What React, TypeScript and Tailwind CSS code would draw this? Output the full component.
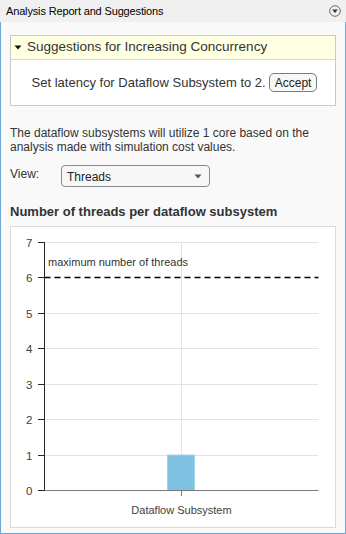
import React from "react";

const ticks = [0, 1, 2, 3, 4, 5, 6, 7];
const yOf = (v: number) => Math.round(263 - (v * 248) / 7) + 0.5;

function Chart() {
  return (
    <svg width="323" height="300" viewBox="0 0 323 300" style={{ display: "block" }}>
      {ticks.map((t) =>
        t > 0 && t !== 6 ? (
          <line key={"g" + t} x1={33.5} x2={307.5} y1={yOf(t)} y2={yOf(t)} stroke="#e3e3e3" strokeWidth={1} />
        ) : null
      )}
      <line x1={170.5} x2={170.5} y1={15.5} y2={263.5} stroke="#e3e3e3" strokeWidth={1} />
      <rect x={156.5} y={228} width={27} height={35.5} fill="#7fc1e3" stroke="#a4d2ec" strokeWidth={1} />
      <line x1={33.5} x2={307.5} y1={50.5} y2={50.5} stroke="#000" strokeWidth={1.5} strokeDasharray="6 4" />
      <text x={37} y={39} fontSize={11} fill="#333" fontFamily="Liberation Sans, Arial, sans-serif">
        maximum number of threads
      </text>
      <line x1={33.5} x2={33.5} y1={15} y2={264} stroke="#262626" strokeWidth={1} />
      <line x1={33.5} x2={307.5} y1={263.5} y2={263.5} stroke="#7a7a7a" strokeWidth={1} />
      <line x1={170.5} x2={170.5} y1={263.5} y2={269} stroke="#7a7a7a" strokeWidth={1} />
      {ticks.map((t) => (
        <g key={"t" + t}>
          <line x1={27} x2={33.5} y1={yOf(t)} y2={yOf(t)} stroke="#262626" strokeWidth={1} />
          <text
            x={21.5}
            y={yOf(t) + 4}
            fontSize={11.5}
            textAnchor="end"
            fill="#404040"
            fontFamily="Liberation Sans, Arial, sans-serif"
          >
            {t}
          </text>
        </g>
      ))}
      <text
        x={170.5}
        y={287}
        fontSize={11}
        textAnchor="middle"
        fill="#404040"
        fontFamily="Liberation Sans, Arial, sans-serif"
      >
        Dataflow Subsystem
      </text>
    </svg>
  );
}

export default function App() {
  return (
    <div
      className="w-[346px] h-[534px] flex flex-col text-[#333]"
      style={{ fontFamily: '"Liberation Sans", Arial, sans-serif' }}
    >
      <div className="h-[22px] shrink-0 bg-[#f0f0f0] flex items-center justify-between pl-[6px] pr-[5px]">
        <span className="text-[11px] text-black tracking-[-0.15px]">Analysis Report and Suggestions</span>
        <svg width="12" height="12" viewBox="0 0 12 12">
          <circle cx="6" cy="6" r="5.3" fill="none" stroke="#6b6b6b" strokeWidth="1" />
          <path d="M3.2 4.6 L8.8 4.6 L6 8 Z" fill="#333" />
        </svg>
      </div>
      <div className="flex-1 flex flex-col bg-[#f9f9f9] border-x border-b border-[#6ea6d4] px-[9px]">
        <div className="mt-[13px] border border-[#c9c9c9] bg-white flex flex-col">
          <div className="h-[24px] bg-[#ffffe1] border-b border-[#d6d6d6] flex items-center pl-[3px] gap-[5px]">
            <svg width="8" height="5" viewBox="0 0 8 5">
              <path d="M0.5 0.5 L7.5 0.5 L4 4.5 Z" fill="#111" />
            </svg>
            <span className="text-[13.5px] text-[#333]">Suggestions for Increasing Concurrency</span>
          </div>
          <div className="h-[45px] flex items-center justify-center gap-[3px] pl-[3px]">
            <span className="text-[13px] text-[#333]">Set latency for Dataflow Subsystem to 2.</span>
            <button className="h-[19px] px-[5px] border border-[#7b7b7b] rounded-[5px] bg-[#f7f7f7] text-[12px] text-[#222] leading-none">
              Accept
            </button>
          </div>
        </div>
        <p className="mt-[20px] text-[12px] leading-[14px] text-[#333]">
          The dataflow subsystems will utilize 1 core based on the analysis made with simulation cost values.
        </p>
        <div className="mt-[11px] flex items-center">
          <span className="w-[51px] text-[12px] text-[#333] -mt-[4px]">View:</span>
          <div className="w-[149px] h-[22px] border border-[#8a8a8a] rounded-[4px] bg-[#f7f7f7] flex items-center justify-between pl-[5px] pr-[7px]">
            <span className="text-[12px] text-[#222] mt-[2px]">Threads</span>
            <svg width="8" height="5" viewBox="0 0 8 5">
              <path d="M0.5 0.5 L7.5 0.5 L4 4.5 Z" fill="#555" />
            </svg>
          </div>
        </div>
        <h2 className="mt-[17px] text-[13px] leading-[16px] font-bold text-[#333]">
          Number of threads per dataflow subsystem
        </h2>
        <div className="mt-[6px] h-[302px] border border-[#dadada] bg-white">
          <Chart />
        </div>
      </div>
    </div>
  );
}
